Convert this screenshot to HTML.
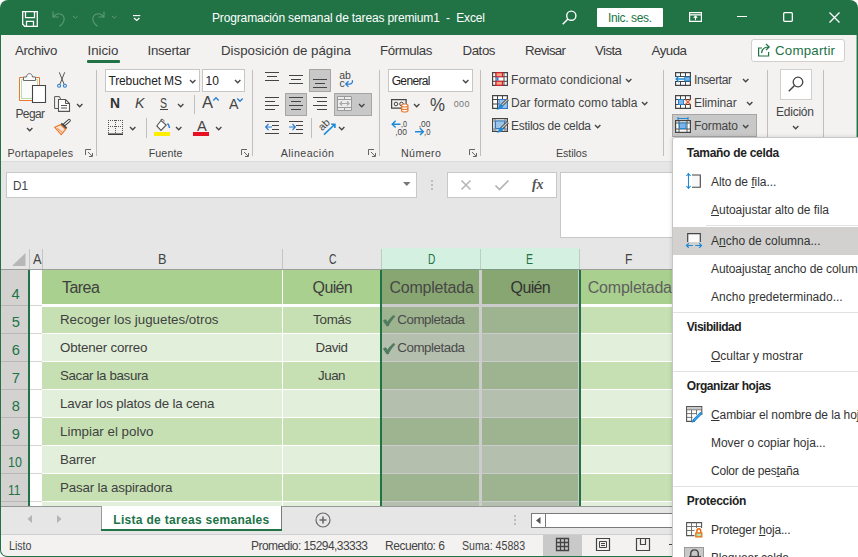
<!DOCTYPE html>
<html lang="es"><head><meta charset="utf-8"><title>Excel</title>
<style>

html,body{margin:0;padding:0;}
body{width:858px;height:557px;overflow:hidden;background:#fff;position:relative;font-family:"Liberation Sans",sans-serif;}
#win{position:absolute;left:0;top:0;width:858px;height:557px;background:#217346;border-radius:8px 8px 7px 7px;}
.a{position:absolute;}
.t{position:absolute;white-space:pre;line-height:normal;}
.t u{text-decoration:underline;text-underline-offset:1px;}
.sep{position:absolute;width:1px;background:#c0bfbe;}
.box{position:absolute;background:#fff;border:1px solid #c6c6c6;box-sizing:border-box;}
.selbtn{position:absolute;background:#c8c8c8;border:1px solid #a6a6a6;box-sizing:border-box;}
svg{position:absolute;overflow:visible;}
.cell{position:absolute;}

</style></head>
<body>

<div id="win">
 <div class="a" id="tabs" style="left:1px;top:35px;width:856px;height:126px;background:#f3f2f1;"></div>
 <div class="a" style="left:1px;top:161px;width:856px;height:1px;background:#dcdcdc;"></div>
 <div class="a" id="fbar" style="left:1px;top:162px;width:856px;height:86px;background:#e6e6e6;"></div>
 <div class="a" style="left:1px;top:248px;width:856px;height:21px;background:#e6e6e6;"></div>
<div class="a" style="left:381px;top:248px;width:199px;height:21px;background:#d3f0e0;"></div>
<div class="a" style="left:1px;top:269px;width:856px;height:1px;background:#9d9d9d;"></div>
<div class="a" style="left:381px;top:269px;width:199px;height:1px;background:#7d9a85;"></div>
<div class="a" style="left:29px;top:249px;width:1px;height:20px;background:#c4c4c4;"></div>
<div class="a" style="left:42px;top:249px;width:1px;height:20px;background:#c4c4c4;"></div>
<div class="a" style="left:282px;top:249px;width:1px;height:20px;background:#c4c4c4;"></div>
<div class="a" style="left:381px;top:249px;width:1px;height:20px;background:#b9cfc2;"></div>
<div class="a" style="left:480px;top:249px;width:1px;height:20px;background:#b9cfc2;"></div>
<div class="a" style="left:579px;top:249px;width:1px;height:20px;background:#b9cfc2;"></div>
<div class="a" style="left:678px;top:249px;width:1px;height:20px;background:#c4c4c4;"></div>
<svg style="left:12px;top:252.500px" width="13.500" height="13"><path d="M13.500 0V13H0Z" fill="#b7b7b7"/></svg>
<div class="a" style="left:1px;top:270px;width:856px;height:236px;background:#fff;"></div>
<div class="a" style="left:1px;top:270px;width:27px;height:236px;background:#d3d2d1;"></div>
<div class="a" style="left:1px;top:305px;width:27px;height:1px;background:#b8b8b8;"></div>
<div class="a" style="left:30px;top:305px;width:12px;height:1px;background:#d4d4d4;"></div>
<div class="a" style="left:1px;top:333px;width:27px;height:1px;background:#b8b8b8;"></div>
<div class="a" style="left:30px;top:333px;width:12px;height:1px;background:#d4d4d4;"></div>
<div class="a" style="left:1px;top:361px;width:27px;height:1px;background:#b8b8b8;"></div>
<div class="a" style="left:30px;top:361px;width:12px;height:1px;background:#d4d4d4;"></div>
<div class="a" style="left:1px;top:389px;width:27px;height:1px;background:#b8b8b8;"></div>
<div class="a" style="left:30px;top:389px;width:12px;height:1px;background:#d4d4d4;"></div>
<div class="a" style="left:1px;top:417px;width:27px;height:1px;background:#b8b8b8;"></div>
<div class="a" style="left:30px;top:417px;width:12px;height:1px;background:#d4d4d4;"></div>
<div class="a" style="left:1px;top:445px;width:27px;height:1px;background:#b8b8b8;"></div>
<div class="a" style="left:30px;top:445px;width:12px;height:1px;background:#d4d4d4;"></div>
<div class="a" style="left:1px;top:473px;width:27px;height:1px;background:#b8b8b8;"></div>
<div class="a" style="left:30px;top:473px;width:12px;height:1px;background:#d4d4d4;"></div>
<div class="a" style="left:1px;top:501px;width:27px;height:1px;background:#b8b8b8;"></div>
<div class="a" style="left:30px;top:501px;width:12px;height:1px;background:#d4d4d4;"></div>
<div class="cell" style="left:42px;top:270px;width:240px;height:34px;background:#a9d08e;"></div>
<div class="cell" style="left:283px;top:270px;width:97px;height:34px;background:#a9d08e;"></div>
<div class="cell" style="left:382px;top:270px;width:97px;height:34px;background:#a9d08e;"></div>
<div class="cell" style="left:482px;top:270px;width:96px;height:34px;background:#a9d08e;"></div>
<div class="cell" style="left:581px;top:270px;width:97px;height:34px;background:#a9d08e;"></div>
<div class="cell" style="left:42px;top:307px;width:240px;height:26px;background:#c6e0b4;"></div>
<div class="cell" style="left:283px;top:307px;width:97px;height:26px;background:#c6e0b4;"></div>
<div class="cell" style="left:382px;top:307px;width:97px;height:26px;background:#c6e0b4;"></div>
<div class="cell" style="left:482px;top:307px;width:96px;height:26px;background:#c6e0b4;"></div>
<div class="cell" style="left:581px;top:307px;width:97px;height:26px;background:#c6e0b4;"></div>
<div class="cell" style="left:42px;top:334px;width:240px;height:27px;background:#e2efda;"></div>
<div class="cell" style="left:283px;top:334px;width:97px;height:27px;background:#e2efda;"></div>
<div class="cell" style="left:382px;top:334px;width:97px;height:27px;background:#e2efda;"></div>
<div class="cell" style="left:482px;top:334px;width:96px;height:27px;background:#e2efda;"></div>
<div class="cell" style="left:581px;top:334px;width:97px;height:27px;background:#e2efda;"></div>
<div class="cell" style="left:42px;top:362px;width:240px;height:27px;background:#c6e0b4;"></div>
<div class="cell" style="left:283px;top:362px;width:97px;height:27px;background:#c6e0b4;"></div>
<div class="cell" style="left:382px;top:362px;width:97px;height:27px;background:#c6e0b4;"></div>
<div class="cell" style="left:482px;top:362px;width:96px;height:27px;background:#c6e0b4;"></div>
<div class="cell" style="left:581px;top:362px;width:97px;height:27px;background:#c6e0b4;"></div>
<div class="cell" style="left:42px;top:390px;width:240px;height:27px;background:#e2efda;"></div>
<div class="cell" style="left:283px;top:390px;width:97px;height:27px;background:#e2efda;"></div>
<div class="cell" style="left:382px;top:390px;width:97px;height:27px;background:#e2efda;"></div>
<div class="cell" style="left:482px;top:390px;width:96px;height:27px;background:#e2efda;"></div>
<div class="cell" style="left:581px;top:390px;width:97px;height:27px;background:#e2efda;"></div>
<div class="cell" style="left:42px;top:418px;width:240px;height:27px;background:#c6e0b4;"></div>
<div class="cell" style="left:283px;top:418px;width:97px;height:27px;background:#c6e0b4;"></div>
<div class="cell" style="left:382px;top:418px;width:97px;height:27px;background:#c6e0b4;"></div>
<div class="cell" style="left:482px;top:418px;width:96px;height:27px;background:#c6e0b4;"></div>
<div class="cell" style="left:581px;top:418px;width:97px;height:27px;background:#c6e0b4;"></div>
<div class="cell" style="left:42px;top:446px;width:240px;height:27px;background:#e2efda;"></div>
<div class="cell" style="left:283px;top:446px;width:97px;height:27px;background:#e2efda;"></div>
<div class="cell" style="left:382px;top:446px;width:97px;height:27px;background:#e2efda;"></div>
<div class="cell" style="left:482px;top:446px;width:96px;height:27px;background:#e2efda;"></div>
<div class="cell" style="left:581px;top:446px;width:97px;height:27px;background:#e2efda;"></div>
<div class="cell" style="left:42px;top:474px;width:240px;height:27px;background:#c6e0b4;"></div>
<div class="cell" style="left:283px;top:474px;width:97px;height:27px;background:#c6e0b4;"></div>
<div class="cell" style="left:382px;top:474px;width:97px;height:27px;background:#c6e0b4;"></div>
<div class="cell" style="left:482px;top:474px;width:96px;height:27px;background:#c6e0b4;"></div>
<div class="cell" style="left:581px;top:474px;width:97px;height:27px;background:#c6e0b4;"></div>
<div class="cell" style="left:42px;top:502px;width:240px;height:4px;background:#e2efda;"></div>
<div class="cell" style="left:283px;top:502px;width:97px;height:4px;background:#e2efda;"></div>
<div class="cell" style="left:382px;top:502px;width:97px;height:4px;background:#e2efda;"></div>
<div class="cell" style="left:482px;top:502px;width:96px;height:4px;background:#e2efda;"></div>
<div class="cell" style="left:581px;top:502px;width:97px;height:4px;background:#e2efda;"></div>
<div class="a" style="left:382px;top:270px;width:197px;height:236px;background:rgba(0,0,0,0.2);"></div>
<div class="a" style="left:28px;top:270px;width:2px;height:236px;background:#217346;"></div>
<div class="a" style="left:380px;top:270px;width:2px;height:236px;background:#217346;"></div>
<div class="a" style="left:579px;top:270px;width:2px;height:236px;background:#217346;"></div>
<svg style="left:383px;top:315px" width="12" height="11" viewBox="0 0 12 11"><path d="M0.300 5.800l2.400 -1.200l1.800 2.600C6.500 4 8.500 1.800 10.800 0.200l1 1.600C9 4.500 7 7.500 5.200 11H3.800z" fill="#4f7d60" stroke="#3d6a4e" stroke-width="0.500"/></svg>
<svg style="left:383px;top:343px" width="12" height="11" viewBox="0 0 12 11"><path d="M0.300 5.800l2.400 -1.200l1.800 2.600C6.500 4 8.500 1.800 10.800 0.200l1 1.600C9 4.500 7 7.500 5.200 11H3.800z" fill="#4f7d60" stroke="#3d6a4e" stroke-width="0.500"/></svg>
 <div class="a" style="left:856px;top:35px;width:1px;height:521px;background:rgba(33,115,70,0.45);z-index:5;"></div>
 <svg style="left:22px;top:11px" width="16" height="16" viewBox="0 0 16 16"><path d="M0.700 0.700h14.600v14.600h-12.600l-2 -2zM3.500 0.700v6h9v-6M4.500 15.300v-5h7v5" fill="none" stroke="#fff" stroke-width="1.3"/></svg>
<svg style="left:52px;top:11px" width="14" height="16" viewBox="0 0 14 16"><path d="M1 0.500v5.500h5.500M1.200 5.800C3 3.500 6 2 9 3.200c4 1.800 4.800 7.500 -1.500 12" fill="none" stroke="#5f9a78" stroke-width="1.1"/></svg>
<svg style="left:72.7px;top:16.2px" width="4.6" height="3.2"><path d="M0 0l2.3 2.2l2.3 -2.2" fill="none" stroke="#5f9a78" stroke-width="1"/></svg>
<svg style="left:91px;top:11px" width="14" height="16" viewBox="0 0 14 16"><path d="M13 0.500v5.500h-5.500M12.800 5.800C11 3.500 8 2 5 3.200c-4 1.800 -4.800 7.500 1.500 12" fill="none" stroke="#5f9a78" stroke-width="1.1"/></svg>
<svg style="left:111.7px;top:16.2px" width="4.6" height="3.2"><path d="M0 0l2.3 2.2l2.3 -2.2" fill="none" stroke="#5f9a78" stroke-width="1"/></svg>
<svg style="left:132.500px;top:15px" width="7" height="6" viewBox="0 0 7 6"><path d="M0 0.600h7.300" stroke="#fff" stroke-width="1.100"/><path d="M1 2.900l2.700 2.500l2.700 -2.500" fill="none" stroke="#fff" stroke-width="1.300"/></svg>
<svg style="left:562px;top:10px" width="15" height="15" viewBox="0 0 15 15"><circle cx="9.300" cy="5.700" r="4.600" fill="none" stroke="#fff" stroke-width="1.4"/><path d="M6 9L0.700 14.300" stroke="#fff" stroke-width="1.5"/></svg>
<div class="a" style="left:597px;top:8px;width:66px;height:19px;background:#fff;border-radius:1px;"></div>
<svg style="left:689px;top:12px" width="13" height="10" viewBox="0 0 13 10"><path d="M0.600 0.600h11.800v8.800h-11.800zM0.600 2.800h11.800" fill="none" stroke="#fff" stroke-width="1.2"/><path d="M6.500 8.300V4.300M4.700 5.800l1.800 -1.800l1.800 1.800" fill="none" stroke="#fff" stroke-width="1.1"/></svg>
<div class="a" style="left:736.500px;top:16px;width:10.500px;height:1.300px;background:#fff;"></div>
<svg style="left:783px;top:12px" width="10" height="10"><rect x="0.650" y="0.650" width="8.700" height="8.700" rx="1" fill="none" stroke="#fff" stroke-width="1.300"/></svg>
<svg style="left:828.500px;top:11.500px" width="11" height="11"><path d="M0.500 0.500l10 10M10.500 0.500l-10 10" stroke="#fff" stroke-width="1.300"/></svg>
<div class="a" style="left:87px;top:60px;width:33px;height:3px;background:#217346;border-radius:1px;"></div>
<div class="a" style="left:750.500px;top:39px;width:94.500px;height:22.500px;background:#fff;border:1px solid #d2d0ce;border-radius:3px;box-sizing:border-box;"></div>
<svg style="left:757px;top:43px" width="14" height="14" viewBox="0 0 14 14"><path d="M5 5H1.600v8h10v-4" fill="none" stroke="#217346" stroke-width="1.2"/><path d="M4.500 10c0.500 -3.500 3 -6 7.500 -6M9 1l3.200 3l-3.200 3" fill="none" stroke="#217346" stroke-width="1.2"/></svg>
<div class="sep" style="left:96px;top:69.5px;height:86.5px;"></div>
<div class="sep" style="left:252px;top:69.5px;height:86.5px;"></div>
<div class="sep" style="left:379px;top:69.5px;height:86.5px;"></div>
<div class="sep" style="left:480px;top:69.5px;height:86.5px;"></div>
<div class="sep" style="left:663px;top:69.5px;height:86.5px;"></div>
<div class="sep" style="left:767px;top:69.5px;height:86.5px;"></div>
<div class="sep" style="left:823px;top:69.5px;height:86.5px;"></div>
<div class="sep" style="left:194px;top:95px;height:19px;"></div>
<div class="sep" style="left:146px;top:118px;height:19.5px;"></div>
<div class="sep" style="left:311px;top:118px;height:20px;"></div>
<svg style="left:85px;top:149px" width="8" height="8" viewBox="0 0 8 8"><path d="M0.500 6V0.500H6" fill="none" stroke="#666" stroke-width="1"/><path d="M3 3l4 4M7.500 4v3.500H4" fill="none" stroke="#666" stroke-width="1"/></svg>
<svg style="left:241px;top:149px" width="8" height="8" viewBox="0 0 8 8"><path d="M0.500 6V0.500H6" fill="none" stroke="#666" stroke-width="1"/><path d="M3 3l4 4M7.500 4v3.500H4" fill="none" stroke="#666" stroke-width="1"/></svg>
<svg style="left:368px;top:149px" width="8" height="8" viewBox="0 0 8 8"><path d="M0.500 6V0.500H6" fill="none" stroke="#666" stroke-width="1"/><path d="M3 3l4 4M7.500 4v3.500H4" fill="none" stroke="#666" stroke-width="1"/></svg>
<svg style="left:469px;top:149px" width="8" height="8" viewBox="0 0 8 8"><path d="M0.500 6V0.500H6" fill="none" stroke="#666" stroke-width="1"/><path d="M3 3l4 4M7.500 4v3.500H4" fill="none" stroke="#666" stroke-width="1"/></svg>
<svg style="left:19px;top:72px" width="28" height="32" viewBox="0 0 28 32">
<path d="M0.500 5.500h20v23h-20z" fill="#fdfdfd" stroke="#e8792d" stroke-width="1"/>
<path d="M2.500 7.500h16v19h-16z" fill="#fbfbfb" stroke="#b9dcae" stroke-width="1"/>
<path d="M4.500 8.500v-3.500h3c0.300 -4.500 5.700 -4.500 6 0h3v3.500z" fill="#fbfbfb" stroke="#6a6a6a" stroke-width="1"/>
<path d="M13.500 13.500h13v17h-13z" fill="#fff" stroke="#444" stroke-width="1.100"/></svg>
<svg style="left:27.3px;top:128.1px" width="5.4" height="3.8"><path d="M0 0l2.7 2.8l2.7 -2.8" fill="none" stroke="#444" stroke-width="1.3"/></svg>
<svg style="left:57px;top:72px" width="11" height="16" viewBox="0 0 11 16">
<path d="M2.300 0.300L7 12M7.700 0.300L3 12" fill="none" stroke="#555" stroke-width="1"/>
<circle cx="2.100" cy="13.800" r="1.500" fill="none" stroke="#2b7cd3" stroke-width="1.100"/><circle cx="7.900" cy="13.800" r="1.500" fill="none" stroke="#2b7cd3" stroke-width="1.100"/></svg>
<svg style="left:54px;top:96px" width="17" height="16" viewBox="0 0 17 16">
<path d="M6.500 3.200L5.500 0.600H0.600v11.900h3.900" fill="none" stroke="#555" stroke-width="1"/>
<path d="M4.500 3.500h7l4 4v7.900h-11z" fill="#fff" stroke="#555" stroke-width="1.1"/><path d="M11.500 3.500v4h4" fill="none" stroke="#555" stroke-width="1"/><path d="M7 9.500h6M7 12h6" stroke="#555" stroke-width="1"/></svg>
<svg style="left:76.8px;top:103.6px" width="5.4" height="3.8"><path d="M0 0l2.7 2.8l2.7 -2.8" fill="none" stroke="#444" stroke-width="1.3"/></svg>
<svg style="left:54px;top:119px" width="17" height="17" viewBox="0 0 17 17">
<path d="M15.200 1.500L10.300 5.800" stroke="#444" stroke-width="3.200" stroke-linecap="round"/><path d="M15.200 1.500L10.800 5.400" stroke="#fff" stroke-width="1.200" stroke-linecap="round"/>
<path d="M7.200 4.600l5.400 5" stroke="#444" stroke-width="2"/>
<path d="M0.700 8.300L6.600 5.600l5 4.800l-4.400 5.300z" fill="#fbe3d3" stroke="#e8792d" stroke-width="1.200"/><path d="M3.500 9.500l5 4" stroke="#e8792d" stroke-width="1"/></svg>
<div class="box" style="left:105px;top:69px;width:94.500px;height:23px;"></div>
<div class="box" style="left:202px;top:69px;width:43px;height:23px;"></div>
<svg style="left:189.8px;top:80.1px" width="5.4" height="3.8"><path d="M0 0l2.7 2.8l2.7 -2.8" fill="none" stroke="#444" stroke-width="1.3"/></svg>
<svg style="left:235.3px;top:80.1px" width="5.4" height="3.8"><path d="M0 0l2.7 2.8l2.7 -2.8" fill="none" stroke="#444" stroke-width="1.3"/></svg>
<div class="a" style="left:160px;top:109px;width:7.500px;height:1px;background:#444;"></div>
<svg style="left:177.8px;top:103.6px" width="5.4" height="3.8"><path d="M0 0l2.7 2.8l2.7 -2.8" fill="none" stroke="#444" stroke-width="1.3"/></svg>
<svg style="left:212.500px;top:97px" width="6" height="4"><path d="M0.300 3.500l2.700 -2.800l2.700 2.800" fill="none" stroke="#2b7cd3" stroke-width="1.3"/></svg>
<svg style="left:236.500px;top:97.500px" width="6" height="4"><path d="M0.300 0.500l2.700 2.800l2.700 -2.800" fill="none" stroke="#2b7cd3" stroke-width="1.3"/></svg>
<svg style="left:108px;top:119.500px" width="16" height="16" viewBox="0 0 16 16"><path d="M0 0.500h15M0 6.500h15M0.500 0v13M14.500 0v13M7.500 0v13" fill="none" stroke="#555" stroke-width="1" stroke-dasharray="1 1"/><path d="M0 14.200h15" stroke="#333" stroke-width="1.500"/></svg>
<svg style="left:130.3px;top:127.1px" width="5.4" height="3.8"><path d="M0 0l2.7 2.8l2.7 -2.8" fill="none" stroke="#444" stroke-width="1.3"/></svg>
<svg style="left:155px;top:119px" width="16" height="13" viewBox="0 0 16 13"><path d="M6 1.500L1.800 7l4.200 4.500l5.200 -5.500z" fill="#fff" stroke="#555" stroke-width="1.100"/><path d="M6 1.500V0.500c1.800 -0.700 3 0.500 3 2" fill="none" stroke="#555" stroke-width="1"/><path d="M12.500 4.500c1.500 1.500 2 3 2 4.500" fill="none" stroke="#2b7cd3" stroke-width="1.500"/></svg>
<div class="a" style="left:153.500px;top:132px;width:16.500px;height:3.500px;background:#ffee00;"></div>
<svg style="left:176.0px;top:127.1px" width="5.4" height="3.8"><path d="M0 0l2.7 2.8l2.7 -2.8" fill="none" stroke="#444" stroke-width="1.3"/></svg>
<div class="a" style="left:192.500px;top:132px;width:16.500px;height:3.500px;background:#e81123;"></div>
<svg style="left:216.0px;top:127.1px" width="5.4" height="3.8"><path d="M0 0l2.7 2.8l2.7 -2.8" fill="none" stroke="#444" stroke-width="1.3"/></svg>
<div class="selbtn" style="left:309px;top:69px;width:22px;height:23px;"></div>
<div class="selbtn" style="left:285px;top:93px;width:22px;height:23px;"></div>
<div class="selbtn" style="left:333.500px;top:93px;width:38.500px;height:23px;"></div>
<div class="a" style="left:265.0px;top:72px;width:14px;height:1px;background:#444;"></div><div class="a" style="left:267.0px;top:76px;width:10px;height:1px;background:#444;"></div><div class="a" style="left:265.0px;top:80px;width:14px;height:1px;background:#444;"></div>
<div class="a" style="left:289.0px;top:75px;width:14px;height:1px;background:#444;"></div><div class="a" style="left:291.0px;top:79px;width:10px;height:1px;background:#444;"></div><div class="a" style="left:289.0px;top:83px;width:14px;height:1px;background:#444;"></div>
<div class="a" style="left:313.0px;top:79px;width:14px;height:1px;background:#444;"></div><div class="a" style="left:315.0px;top:83px;width:10px;height:1px;background:#444;"></div><div class="a" style="left:313.0px;top:87px;width:14px;height:1px;background:#444;"></div>
<div class="a" style="left:265px;top:97px;width:14px;height:1px;background:#444;"></div><div class="a" style="left:265px;top:101px;width:10px;height:1px;background:#444;"></div><div class="a" style="left:265px;top:105px;width:14px;height:1px;background:#444;"></div><div class="a" style="left:265px;top:109px;width:10px;height:1px;background:#444;"></div>
<div class="a" style="left:289.0px;top:97px;width:14px;height:1px;background:#444;"></div><div class="a" style="left:291.0px;top:101px;width:10px;height:1px;background:#444;"></div><div class="a" style="left:289.0px;top:105px;width:14px;height:1px;background:#444;"></div><div class="a" style="left:291.0px;top:109px;width:10px;height:1px;background:#444;"></div>
<div class="a" style="left:313px;top:97px;width:14px;height:1px;background:#444;"></div><div class="a" style="left:317px;top:101px;width:10px;height:1px;background:#444;"></div><div class="a" style="left:313px;top:105px;width:14px;height:1px;background:#444;"></div><div class="a" style="left:317px;top:109px;width:10px;height:1px;background:#444;"></div>
<svg style="left:337px;top:96px" width="15" height="15" viewBox="0 0 15 15"><path d="M0.500 0.500h14v14h-14z" fill="#ececec" stroke="#9a9a9a" stroke-width="1"/><path d="M0.500 3.500h14M0.500 11.500h14M7.500 0.500v3M7.500 11.500v3" fill="none" stroke="#9a9a9a" stroke-width="1"/><path d="M3 7.500h9M5 5.500l-2 2l2 2M10 5.500l2 2l-2 2" fill="none" stroke="#a8a8a8" stroke-width="1.100"/></svg>
<svg style="left:359.3px;top:103.6px" width="5.4" height="3.8"><path d="M0 0l2.7 2.8l2.7 -2.8" fill="none" stroke="#444" stroke-width="1.3"/></svg>
<svg style="left:338px;top:72px" width="16" height="17" viewBox="0 0 16 17"><text x="1.200" y="7.400" font-family="Liberation Sans, sans-serif" font-size="10.500" fill="#444">ab</text><text x="1.400" y="14.600" font-family="Liberation Sans, sans-serif" font-size="10.500" fill="#444">c</text><path d="M14.300 8.200c0.800 2.600 -1 3.900 -3 3.900h-3.300M10.500 9.300l-2.800 2.800l2.800 2.800" fill="none" stroke="#2b7cd3" stroke-width="1.300"/></svg>
<div class="a" style="left:272px;top:125px;width:7px;height:1px;background:#444;"></div><div class="a" style="left:272px;top:129px;width:7px;height:1px;background:#444;"></div><div class="a" style="left:265px;top:121px;width:14px;height:1px;background:#444;"></div><div class="a" style="left:265px;top:133px;width:14px;height:1px;background:#444;"></div>
<svg style="left:264.500px;top:123px" width="7" height="8"><path d="M7 4H0.800M3.500 1L0.700 4l2.800 3" fill="none" stroke="#2b7cd3" stroke-width="1.200"/></svg>
<div class="a" style="left:296px;top:125px;width:7px;height:1px;background:#444;"></div><div class="a" style="left:296px;top:129px;width:7px;height:1px;background:#444;"></div><div class="a" style="left:289px;top:121px;width:14px;height:1px;background:#444;"></div><div class="a" style="left:289px;top:133px;width:14px;height:1px;background:#444;"></div>
<svg style="left:288.500px;top:123px" width="7" height="8"><path d="M0 4h6.200M3.500 1l2.800 3l-2.800 3" fill="none" stroke="#2b7cd3" stroke-width="1.200"/></svg>
<svg style="left:318px;top:119px" width="18" height="17" viewBox="0 0 18 17"><text x="0" y="0" transform="translate(4.300,12.300) rotate(-45)" font-family="Liberation Sans, sans-serif" font-size="10.500" fill="#444">ab</text><path d="M6 15.600L16.600 5.500M13.200 5.200h3.700v3.700" fill="none" stroke="#1e8ad6" stroke-width="1.600"/></svg>
<svg style="left:339.3px;top:127.1px" width="5.4" height="3.8"><path d="M0 0l2.7 2.8l2.7 -2.8" fill="none" stroke="#444" stroke-width="1.3"/></svg>
<div class="box" style="left:388px;top:69px;width:85px;height:23px;"></div>
<svg style="left:463.3px;top:80.1px" width="5.4" height="3.8"><path d="M0 0l2.7 2.8l2.7 -2.8" fill="none" stroke="#444" stroke-width="1.3"/></svg>
<svg style="left:390.500px;top:98.500px" width="18" height="14" viewBox="0 0 18 14"><path d="M0.600 0.600h14.500v8.500h-14.500z" fill="#f3f2f1" stroke="#444" stroke-width="1.200"/><circle cx="5" cy="5" r="1.800" fill="none" stroke="#444" stroke-width="1"/><circle cx="10.500" cy="5" r="1.800" fill="none" stroke="#444" stroke-width="1"/><path d="M10.500 6.500v5c0 2 6.500 2 6.500 0v-5c0 -2 -6.500 -2 -6.500 0c0 2 6.500 2 6.500 0M10.500 9c0 2 6.500 2 6.500 0" fill="#fff" stroke="#e8792d" stroke-width="1.100"/></svg>
<svg style="left:414.0px;top:103.6px" width="5.4" height="3.8"><path d="M0 0l2.7 2.8l2.7 -2.8" fill="none" stroke="#444" stroke-width="1.3"/></svg>
<svg style="left:390.500px;top:120px" width="17" height="16" viewBox="0 0 17 16"><path d="M9.500 4.200H1.200M4.600 0.800L1.200 4.200l3.400 3.400" fill="none" stroke="#1e8ad6" stroke-width="1.400"/><text x="10" y="6.800" textLength="6" font-family="Liberation Sans, sans-serif" font-size="9.500" fill="#444" lengthAdjust="spacingAndGlyphs">,0</text><text x="4.200" y="14.900" textLength="11.800" font-family="Liberation Sans, sans-serif" font-size="9.500" fill="#444" lengthAdjust="spacingAndGlyphs">,00</text></svg>
<svg style="left:415px;top:120px" width="17" height="16" viewBox="0 0 17 16"><path d="M0 11.700h8.300M5 8.300l3.400 3.400l-3.400 3.400" fill="none" stroke="#1e8ad6" stroke-width="1.400"/><text x="3.800" y="6.800" textLength="11.600" font-family="Liberation Sans, sans-serif" font-size="9.500" fill="#444" lengthAdjust="spacingAndGlyphs">,00</text><text x="9" y="14.900" textLength="6.400" font-family="Liberation Sans, sans-serif" font-size="9.500" fill="#444" lengthAdjust="spacingAndGlyphs">,0</text></svg>
<svg style="left:492px;top:72px" width="16" height="14" viewBox="0 0 16 14"><path d="M0.600 0.600h14.800v12.800h-14.800z" fill="#fff" stroke="#444" stroke-width="1.200"/><path d="M0.600 4.700h14.800M0.600 9.300h14.800M4 0.600v12.800M12 0.600v12.800" stroke="#444" stroke-width="1"/><path d="M4 0.700h6.500v4h-6.500zM4 9.300h6.500v4h-6.500z" fill="#f4a582" stroke="#e81123" stroke-width="1.100"/><path d="M4.600 5.200h1.900v3.600h-1.900z" fill="#2b7cd3"/></svg>
<svg style="left:492px;top:95px" width="17" height="16" viewBox="0 0 17 16"><path d="M0.600 0.600h14.800v12.800h-14.800z" fill="#fff" stroke="#444" stroke-width="1.200"/><path d="M0.600 4.500h14.800M0.600 9h14.800M5.500 0.600v12.800M10.500 0.600v12.800" stroke="#444" stroke-width="1"/><path d="M7 4.500h8.400v8.900h-8.400z" fill="#9dc3e6" stroke="#2b7cd3" stroke-width="1"/><path d="M15.800 4.200L9.200 10.800" stroke="#444" stroke-width="3"/><path d="M15.500 4.500L9.500 10.500" stroke="#c8c8c8" stroke-width="1.200"/><path d="M9.600 9.200l1.800 1.800c-1 2.800 -4.500 3.800 -7.200 3.600c2 -0.800 2.300 -2 2.600 -3.200c0.300 -1.200 1.300 -2.200 2.800 -2.200z" fill="#1e8ad6"/></svg>
<svg style="left:492px;top:118px" width="17" height="16" viewBox="0 0 17 16"><path d="M0.600 0.600h14.800v12.800h-14.800z" fill="#fff" stroke="#444" stroke-width="1.200"/><path d="M0.600 3h14.800M3 0.600v12.800M0.600 11h14.800M13 0.600v12.800" stroke="#666" stroke-width="0.800"/><path d="M3.500 3h9v7.500h-9z" fill="#9dc3e6" stroke="#2b7cd3" stroke-width="1"/><path d="M15.800 4.200L9.200 10.800" stroke="#444" stroke-width="3"/><path d="M15.500 4.500L9.500 10.500" stroke="#c8c8c8" stroke-width="1.200"/><path d="M9.600 9.200l1.800 1.800c-1 2.800 -4.500 3.800 -7.200 3.600c2 -0.800 2.300 -2 2.600 -3.200c0.300 -1.200 1.300 -2.200 2.800 -2.200z" fill="#1e8ad6"/></svg>
<svg style="left:625.8px;top:78.6px" width="5.4" height="3.8"><path d="M0 0l2.7 2.8l2.7 -2.8" fill="none" stroke="#444" stroke-width="1.3"/></svg>
<svg style="left:642.3px;top:101.6px" width="5.4" height="3.8"><path d="M0 0l2.7 2.8l2.7 -2.8" fill="none" stroke="#444" stroke-width="1.3"/></svg>
<svg style="left:594.8px;top:124.6px" width="5.4" height="3.8"><path d="M0 0l2.7 2.8l2.7 -2.8" fill="none" stroke="#444" stroke-width="1.3"/></svg>
<div class="selbtn" style="left:672px;top:114px;width:85px;height:23px;"></div>
<svg style="left:675px;top:72px" width="16" height="14" viewBox="0 0 16 14"><path d="M0.600 0.600h14.800v12.800h-14.800z" fill="#fff" stroke="#444" stroke-width="1.200"/><path d="M0.600 4.500h14.800M0.600 9.500h14.800M5.500 0.600v3.900M10.500 0.600v3.900M5.500 9.500v3.900M10.500 9.500v3.900" stroke="#444" stroke-width="1"/><path d="M0 5h10v4h-10z" fill="#fff"/><path d="M9.800 5h5.200v4h-5.200z" fill="#7fb2e5" stroke="#1e8ad6" stroke-width="1"/><path d="M10 7H1M4 4L1 7l3 3" fill="none" stroke="#1e8ad6" stroke-width="1.300"/></svg>
<svg style="left:675px;top:95px" width="16" height="14" viewBox="0 0 16 14"><path d="M0.600 0.600h14.800v12.800h-14.800z" fill="#fff" stroke="#444" stroke-width="1.200"/><path d="M0.600 4.500h14.800M0.600 9.500h14.800M5.500 0.600v3.900M10.500 0.600v3.900M5.500 9.500v3.900M10.500 9.500v3.900" stroke="#444" stroke-width="1"/><path d="M1.200 5h15v4h-15z" fill="#f3f2f1"/><path d="M3.500 4.500h5v5h-5z" fill="#7fb2e5" stroke="#1e8ad6" stroke-width="1"/><path d="M10.200 4.300l5.400 5.400M15.600 4.300l-5.400 5.400" stroke="#e8532d" stroke-width="1.200"/></svg>
<svg style="left:675px;top:117px" width="16" height="16" viewBox="0 0 16 16"><path d="M3 1.500h10M3 0v3M13 0v3" stroke="#1e8ad6" stroke-width="1.100"/><path d="M0.600 3.600h14.800v11.800h-14.800z" fill="#fff" stroke="#444" stroke-width="1.200"/><path d="M0.600 6h14.800M0.600 12h14.800M4 3.600v11.800M12 3.600v11.800" stroke="#444" stroke-width="0.900"/><path d="M4.500 6h6.500v5.500h-6.500z" fill="#7fb2e5" stroke="#1e8ad6" stroke-width="1"/></svg>
<svg style="left:743.3px;top:78.6px" width="5.4" height="3.8"><path d="M0 0l2.7 2.8l2.7 -2.8" fill="none" stroke="#444" stroke-width="1.3"/></svg>
<svg style="left:747.3px;top:101.6px" width="5.4" height="3.8"><path d="M0 0l2.7 2.8l2.7 -2.8" fill="none" stroke="#444" stroke-width="1.3"/></svg>
<svg style="left:742.8px;top:124.6px" width="5.4" height="3.8"><path d="M0 0l2.7 2.8l2.7 -2.8" fill="none" stroke="#444" stroke-width="1.3"/></svg>
<div class="box" style="left:780px;top:69px;width:31.500px;height:31px;border-color:#d0d0d0;"></div>
<svg style="left:788px;top:76px" width="16" height="16" viewBox="0 0 16 16"><circle cx="10" cy="6" r="4.800" fill="none" stroke="#444" stroke-width="1.300"/><path d="M6.500 9.500L0.800 15.200" stroke="#444" stroke-width="1.500"/></svg>
<svg style="left:792.8px;top:126.1px" width="5.4" height="3.8"><path d="M0 0l2.7 2.8l2.7 -2.8" fill="none" stroke="#444" stroke-width="1.3"/></svg>
<div class="box" style="left:6px;top:172px;width:411px;height:26px;border-color:#c8c8c8;"></div>
<svg style="left:403px;top:182px" width="8" height="4"><path d="M0 0h7.500l-3.750 4z" fill="#777"/></svg>
<svg style="left:431px;top:180px" width="2" height="10"><path d="M0 0h2v2h-2zM0 4h2v2h-2zM0 8h2v2h-2z" fill="#bdbdbd"/></svg>
<div class="box" style="left:447px;top:172px;width:110px;height:26px;border-color:#c8c8c8;"></div>
<svg style="left:461px;top:180px" width="10" height="10"><path d="M0.500 0.500l9 9M9.500 0.500l-9 9" stroke="#b4b4b4" stroke-width="1.500"/></svg>
<svg style="left:495px;top:180px" width="14" height="10"><path d="M0.500 5.500l4 4L13.500 0.500" fill="none" stroke="#b4b4b4" stroke-width="1.700"/></svg>
<div class="box" style="left:560px;top:172px;width:296px;height:66px;border-color:#c8c8c8;"></div>
 <div class="a" style="left:1px;top:506px;width:856px;height:1px;background:#979797;"></div>
<div class="a" style="left:1px;top:507px;width:856px;height:27px;background:#e6e6e6;"></div>
<div class="a" style="left:1px;top:534px;width:856px;height:1px;background:#cfcfcf;"></div>
<div class="a" style="left:1px;top:535px;width:856px;height:21px;background:#f3f2f1;border-radius:0 0 0 6px;"></div>
<div class="a" style="left:101px;top:506px;width:181px;height:23px;background:#fff;border-left:1px solid #9a9a9a;border-right:1px solid #7c7c7c;box-sizing:border-box;"></div>
<div class="a" style="left:101px;top:529px;width:181px;height:2px;background:#217346;"></div>
<svg style="left:27px;top:515px" width="36" height="9"><path d="M5 0v8L0.5 4z M30 0v8l4.500 -4z" fill="#b4b4b4"/></svg>
<svg style="left:315px;top:511.700px" width="16" height="16" viewBox="0 0 16 16"><circle cx="8" cy="8" r="7" fill="none" stroke="#6a6a6a" stroke-width="1.2"/><path d="M4.500 8h7M8 4.500v7" stroke="#6a6a6a" stroke-width="1.6"/></svg>
<svg style="left:514px;top:515px" width="2" height="10"><path d="M0 0h2v2h-2zM0 4h2v2h-2zM0 8h2v2h-2z" fill="#bdbdbd"/></svg>
<div class="a" style="left:531px;top:513px;width:325px;height:15px;background:#fff;border:1px solid #7a7a7a;box-sizing:border-box;"></div>
<div class="a" style="left:545px;top:513px;width:1px;height:15px;background:#7a7a7a;"></div>
<svg style="left:536px;top:517px" width="5" height="7"><path d="M4.500 0v7L0 3.500z" fill="#555"/></svg>
<div class="a" style="left:543px;top:535px;width:39px;height:21px;background:#c9c9c9;"></div>
<svg style="left:556px;top:538px" width="13" height="13" viewBox="0 0 13 13"><path d="M0.500 0.500h12v12h-12zM0.500 4.500h12M0.500 8.500h12M4.500 0.500v12M8.500 0.500v12" fill="none" stroke="#444" stroke-width="1.3"/></svg>
<svg style="left:596px;top:538px" width="14" height="13" viewBox="0 0 14 13"><path d="M0.500 0.500h13v12h-13z" fill="none" stroke="#444" stroke-width="1.2"/><path d="M3.500 3.500h7v6h-7zM5 5.500h4M5 7.500h4" fill="none" stroke="#444" stroke-width="1"/></svg>
<svg style="left:636px;top:538px" width="14" height="13" viewBox="0 0 14 13"><path d="M0.500 0.500h13v12h-13zM4.500 0.500v6h5v-6" fill="none" stroke="#444" stroke-width="1.2"/></svg>
<div class="a" style="left:669px;top:544px;width:6px;height:1px;background:#444;"></div>
 <div class="a" style="left:672px;top:137px;width:190px;height:425px;background:#fff;border:1px solid #c6c6c6;border-radius:3px 0 0 0;box-sizing:border-box;z-index:20;box-shadow:0 0 4px rgba(0,0,0,0.15);"></div>
<div class="a" style="left:673px;top:227px;width:185px;height:28px;background:#d2d1d0;z-index:21;"></div>
<div class="a" style="left:706px;top:225px;width:152px;height:1px;background:#e1e1e1;z-index:21;"></div>
<div class="a" style="left:673px;top:312px;width:185px;height:1px;background:#e1e1e1;z-index:21;"></div>
<div class="a" style="left:673px;top:371px;width:185px;height:1px;background:#e1e1e1;z-index:21;"></div>
<div class="a" style="left:673px;top:486px;width:185px;height:1px;background:#e1e1e1;z-index:21;"></div>
<svg style="left:686px;top:172px;z-index:22" width="16" height="18" viewBox="0 0 16 18"><path d="M2.500 1.800v14.400M0.400 4l2.100 -2.400l2.100 2.400M0.400 14l2.100 2.400l2.100 -2.400" fill="none" stroke="#1e8ad6" stroke-width="1.100"/><path d="M6 3h8.300v12.200h-8.300" fill="#f8f8f8" stroke="#444" stroke-width="1.100"/></svg>
<svg style="left:686px;top:230px;z-index:22" width="18" height="18" viewBox="0 0 18 18"><path d="M1.700 12V3.700h12.600V12" fill="#fafafa" stroke="#444" stroke-width="1.200"/><path d="M0.600 15.500h6.200M2.800 13.300l-2.300 2.200l2.300 2.200M9.200 15.500h6.200M13.200 13.300l2.300 2.200l-2.300 2.200" fill="none" stroke="#1e8ad6" stroke-width="1.200"/></svg>
<svg style="left:686px;top:406px;z-index:22" width="18" height="17" viewBox="0 0 18 17"><path d="M0.600 0.600h15.200v14.800h-15.200z" fill="#fff" stroke="#555" stroke-width="1.100"/><path d="M1.200 1.200h14v2h-14z" fill="#c8c8c8"/><path d="M0.600 3.800h15.200M0.600 7.600h10M0.600 11.400h6M5.500 3.800v11.600M10.500 3.800v5" stroke="#666" stroke-width="0.900"/><path d="M9 9h8v8h-8z" fill="#fff"/><path d="M14.500 5.800l2 2l-8 8l-3 1l1 -3z" fill="#1e8ad6"/><path d="M14.300 8l-5.600 5.600" stroke="#cfe4f7" stroke-width="0.700" stroke-dasharray="1 0.800"/></svg>
<svg style="left:686px;top:522px;z-index:22" width="18" height="17" viewBox="0 0 18 17"><path d="M0.600 0.600h15v13h-15z" fill="#fff" stroke="#555" stroke-width="1.100"/><path d="M0.600 4.500h15M0.600 8.500h15M5.500 0.600v13M10.500 0.600v13" stroke="#666" stroke-width="0.900"/><path d="M8.500 6h9v9h-9z" fill="#fff"/><path d="M9.800 10.800h6v4h-6z" fill="#b6e2b0" stroke="#e8690b" stroke-width="1.200"/><path d="M10.900 10.600V9c0 -3 3.800 -3 3.800 0v1.600" fill="none" stroke="#e8690b" stroke-width="1.500"/></svg>
<div class="a" style="left:684px;top:547px;width:20px;height:14px;background:#c8c8c8;border:1px solid #9a9a9a;box-sizing:border-box;z-index:22;"></div><svg style="left:689px;top:549px;z-index:23" width="12" height="9" viewBox="0 0 12 9"><path d="M1.700 9V5c0 -5.500 7.600 -5.500 7.600 0V9" fill="none" stroke="#444" stroke-width="1.400"/><path d="M0 7.600h12" stroke="#444" stroke-width="1.400"/></svg>
 <span class="t" style="left:212px;font-size:12px;color:#fff;letter-spacing:-0.148px;top:11.00px;">Programación semanal de tareas premium1  -  Excel</span>
<span class="t" style="left:608px;font-size:12px;color:#217346;letter-spacing:-0.373px;top:11.00px;">Inic. ses.</span>
<span class="t" style="left:15px;font-size:13.3px;color:#3b3b3b;letter-spacing:-0.341px;top:43.00px;">Archivo</span>
<span class="t" style="left:87.5px;font-size:13.3px;color:#3b3b3b;letter-spacing:-0.049px;top:43.00px;">Inicio</span>
<span class="t" style="left:147.5px;font-size:13.3px;color:#3b3b3b;letter-spacing:-0.299px;top:43.00px;">Insertar</span>
<span class="t" style="left:221px;font-size:13.3px;color:#3b3b3b;letter-spacing:-0.005px;top:43.00px;">Disposición de página</span>
<span class="t" style="left:380px;font-size:13.3px;color:#3b3b3b;letter-spacing:-0.417px;top:43.00px;">Fórmulas</span>
<span class="t" style="left:462.5px;font-size:13.3px;color:#3b3b3b;letter-spacing:-0.438px;top:43.00px;">Datos</span>
<span class="t" style="left:525px;font-size:13.3px;color:#3b3b3b;letter-spacing:-0.680px;top:43.00px;">Revisar</span>
<span class="t" style="left:595px;font-size:13.3px;color:#3b3b3b;letter-spacing:-0.582px;top:43.00px;">Vista</span>
<span class="t" style="left:651.5px;font-size:13.3px;color:#3b3b3b;letter-spacing:-0.492px;top:43.00px;">Ayuda</span>
<span class="t" style="left:775px;font-size:13.3px;color:#217346;letter-spacing:0.203px;top:43.00px;">Compartir</span>
<span class="t" style="left:7.5px;font-size:10.67px;color:#444;letter-spacing:0.244px;top:147.00px;">Portapapeles</span>
<span class="t" style="left:148.7px;font-size:10.67px;color:#444;letter-spacing:0.123px;top:147.00px;">Fuente</span>
<span class="t" style="left:280.7px;font-size:10.67px;color:#444;letter-spacing:0.459px;top:147.00px;">Alineación</span>
<span class="t" style="left:401px;font-size:10.67px;color:#444;letter-spacing:0.419px;top:147.00px;">Número</span>
<span class="t" style="left:556px;font-size:10.67px;color:#444;letter-spacing:-0.065px;top:147.00px;">Estilos</span>
<span class="t" style="left:15.5px;font-size:12px;color:#444;letter-spacing:-0.633px;top:107.00px;">Pegar</span>
<span class="t" style="left:108.4px;font-size:12px;color:#222;letter-spacing:-0.120px;top:74.00px;">Trebuchet MS</span>
<span class="t" style="left:205.5px;font-size:12px;color:#222;top:74.00px;">10</span>
<span class="t" style="left:110px;font-size:14px;color:#333;font-weight:bold;top:95.00px;transform:scaleX(0.988);transform-origin:0 0;">N</span>
<span class="t" style="left:135px;font-size:14px;color:#444;font-style:italic;top:95.00px;transform:scaleX(1.017);transform-origin:0 0;">K</span>
<span class="t" style="left:160px;font-size:14px;color:#444;top:95.00px;transform:scaleX(0.749);transform-origin:0 0;">S</span>
<span class="t" style="left:202px;font-size:16px;color:#444;top:94.00px;transform:scaleX(1.031);transform-origin:0 0;">A</span>
<span class="t" style="left:228.5px;font-size:14px;color:#444;top:96.00px;transform:scaleX(1.017);transform-origin:0 0;">A</span>
<span class="t" style="left:196.5px;font-size:14px;color:#444;top:118.00px;transform:scaleX(1.049);transform-origin:0 0;">A</span>
<span class="t" style="left:391.7px;font-size:12px;color:#222;letter-spacing:-0.651px;top:74.00px;">General</span>
<span class="t" style="left:430px;font-size:19px;color:#444;top:94.00px;transform:scaleX(0.887);transform-origin:0 0;">%</span>
<span class="t" style="left:453.7px;font-size:9px;color:#777;letter-spacing:0.384px;top:99.00px;">000</span>
<span class="t" style="left:511px;font-size:12px;color:#444;letter-spacing:0.135px;top:73.00px;">Formato condicional</span>
<span class="t" style="left:511px;font-size:12px;color:#444;letter-spacing:0.053px;top:96.00px;">Dar formato como tabla</span>
<span class="t" style="left:511px;font-size:12px;color:#444;letter-spacing:-0.270px;top:119.00px;">Estilos de celda</span>
<span class="t" style="left:694px;font-size:12px;color:#444;letter-spacing:-0.384px;top:73.00px;">Insertar</span>
<span class="t" style="left:694px;font-size:12px;color:#444;letter-spacing:-0.092px;top:96.00px;">Eliminar</span>
<span class="t" style="left:694px;font-size:12px;color:#444;letter-spacing:-0.115px;top:119.00px;">Formato</span>
<span class="t" style="left:776px;font-size:12px;color:#444;letter-spacing:-0.227px;top:105.00px;">Edición</span>
<span class="t" style="left:13px;font-size:13px;color:#444;top:178.00px;transform:scaleX(0.902);transform-origin:0 0;">D1</span>
<span class="t" style="left:532px;font-size:14px;color:#555;font-weight:bold;font-style:italic;font-family:'Liberation Serif',serif;letter-spacing:-0.072px;top:177.00px;">fx</span>
<span class="t" style="left:32.5px;font-size:14.67px;color:#444;top:251.00px;transform:scaleX(0.869);transform-origin:0 0;">A</span>
<span class="t" style="left:157.5px;font-size:14.67px;color:#444;top:251.00px;transform:scaleX(0.869);transform-origin:0 0;">B</span>
<span class="t" style="left:328.8px;font-size:14.67px;color:#444;top:251.00px;transform:scaleX(0.708);transform-origin:0 0;">C</span>
<span class="t" style="left:427.7px;font-size:14.67px;color:#217346;top:251.00px;transform:scaleX(0.689);transform-origin:0 0;">D</span>
<span class="t" style="left:526px;font-size:14.67px;color:#217346;top:251.00px;transform:scaleX(0.716);transform-origin:0 0;">E</span>
<span class="t" style="left:625px;font-size:14.67px;color:#444;top:251.00px;transform:scaleX(0.827);transform-origin:0 0;">F</span>
<span class="t" style="left:11.4px;font-size:14.67px;color:#217346;top:286.00px;">4</span>
<span class="t" style="left:11.8px;font-size:14.67px;color:#217346;top:314.00px;">5</span>
<span class="t" style="left:11.8px;font-size:14.67px;color:#217346;top:342.00px;">6</span>
<span class="t" style="left:11.8px;font-size:14.67px;color:#217346;top:370.00px;">7</span>
<span class="t" style="left:11.8px;font-size:14.67px;color:#217346;top:398.00px;">8</span>
<span class="t" style="left:11.8px;font-size:14.67px;color:#217346;top:426.00px;">9</span>
<span class="t" style="left:8.4px;font-size:14.67px;color:#217346;top:454.00px;transform:scaleX(0.852);transform-origin:0 0;">10</span>
<span class="t" style="left:8.4px;font-size:14.67px;color:#217346;top:482.00px;transform:scaleX(0.828);transform-origin:0 0;">11</span>
<span class="t" style="left:62px;font-size:16px;color:#404040;letter-spacing:-0.558px;top:279.00px;">Tarea</span>
<span class="t" style="left:312.6px;font-size:16px;color:#404040;letter-spacing:-0.651px;top:279.00px;">Quién</span>
<span class="t" style="left:389.4px;font-size:16px;color:#474747;letter-spacing:-0.209px;top:279.00px;">Completada</span>
<span class="t" style="left:510.6px;font-size:16px;color:#333;letter-spacing:-0.651px;top:279.00px;">Quién</span>
<span class="t" style="left:587.8px;font-size:16px;color:#5f5f5f;letter-spacing:-0.231px;top:279.00px;">Completada</span>
<span class="t" style="left:60px;font-size:13.33px;color:#404040;letter-spacing:-0.002px;top:312.00px;">Recoger los juguetes/otros</span>
<span class="t" style="left:60px;font-size:13.33px;color:#404040;letter-spacing:-0.165px;top:340.00px;">Obtener correo</span>
<span class="t" style="left:60px;font-size:13.33px;color:#404040;letter-spacing:-0.347px;top:368.00px;">Sacar la basura</span>
<span class="t" style="left:60px;font-size:13.33px;color:#404040;letter-spacing:-0.156px;top:396.00px;">Lavar los platos de la cena</span>
<span class="t" style="left:60px;font-size:13.33px;color:#404040;letter-spacing:0.010px;top:424.00px;">Limpiar el polvo</span>
<span class="t" style="left:60px;font-size:13.33px;color:#404040;letter-spacing:-0.206px;top:452.00px;">Barrer</span>
<span class="t" style="left:60px;font-size:13.33px;color:#404040;letter-spacing:-0.171px;top:480.00px;">Pasar la aspiradora</span>
<span class="t" style="left:313px;font-size:13.33px;color:#404040;letter-spacing:-0.191px;top:312.00px;">Tomás</span>
<span class="t" style="left:315.5px;font-size:13.33px;color:#404040;letter-spacing:-0.395px;top:340.00px;">David</span>
<span class="t" style="left:318px;font-size:13.33px;color:#404040;letter-spacing:-0.469px;top:368.00px;">Juan</span>
<span class="t" style="left:397.3px;font-size:13.33px;color:#4a4a4a;letter-spacing:-0.464px;top:312.00px;">Completada</span>
<span class="t" style="left:397.3px;font-size:13.33px;color:#4a4a4a;letter-spacing:-0.464px;top:340.00px;">Completada</span>
<span class="t" style="left:113.3px;font-size:12px;color:#217346;font-weight:bold;letter-spacing:0.301px;top:513.00px;">Lista de tareas semanales</span>
<span class="t" style="left:8.7px;font-size:12px;color:#444;top:539.00px;transform:scaleX(0.887);transform-origin:0 0;">Listo</span>
<span class="t" style="left:251px;font-size:12px;color:#444;letter-spacing:-0.555px;top:539.00px;">Promedio: 15294,33333</span>
<span class="t" style="left:385px;font-size:12px;color:#444;letter-spacing:-0.472px;top:539.00px;">Recuento: 6</span>
<span class="t" style="left:461.5px;font-size:12px;color:#444;top:539.00px;transform:scaleX(0.884);transform-origin:0 0;">Suma: 45883</span>
<span class="t" style="left:686.8px;font-size:12px;color:#222;font-weight:bold;letter-spacing:-0.292px;top:146.00px;z-index:30;">Tamaño de celda</span>
<span class="t" style="left:711px;font-size:12px;color:#333;letter-spacing:-0.054px;top:175.00px;z-index:30;">Alto de <u>f</u>ila...</span>
<span class="t" style="left:711px;font-size:12px;color:#333;letter-spacing:-0.033px;top:203.00px;z-index:30;"><u>A</u>utoajustar alto de fila</span>
<span class="t" style="left:711px;font-size:12px;color:#333;letter-spacing:0.003px;top:234.00px;z-index:30;">A<u>n</u>cho de columna...</span>
<span class="t" style="left:711px;font-size:12px;color:#333;letter-spacing:-0.079px;top:262.00px;z-index:30;">Autoajusta<u>r</u> ancho de columna</span>
<span class="t" style="left:711px;font-size:12px;color:#333;letter-spacing:0.012px;top:290.00px;z-index:30;">Ancho <u>p</u>redeterminado...</span>
<span class="t" style="left:686.8px;font-size:12px;color:#222;font-weight:bold;letter-spacing:-0.500px;top:320.00px;z-index:30;">Visibilidad</span>
<span class="t" style="left:711px;font-size:12px;color:#333;letter-spacing:-0.002px;top:349.00px;z-index:30;"><u>O</u>cultar y mostrar</span>
<span class="t" style="left:686.8px;font-size:12px;color:#222;font-weight:bold;letter-spacing:-0.443px;top:379.00px;z-index:30;">Organizar hojas</span>
<span class="t" style="left:711px;font-size:12px;color:#333;letter-spacing:-0.090px;top:408.00px;z-index:30;"><u>C</u>ambiar el nombre de la hoja</span>
<span class="t" style="left:711px;font-size:12px;color:#333;letter-spacing:-0.034px;top:436.00px;z-index:30;">Mover o copiar ho<u>j</u>a...</span>
<span class="t" style="left:711px;font-size:12px;color:#333;letter-spacing:-0.215px;top:464.00px;z-index:30;">Color de pes<u>t</u>aña</span>
<span class="t" style="left:686.8px;font-size:12px;color:#222;font-weight:bold;letter-spacing:-0.268px;top:494.00px;z-index:30;">Protección</span>
<span class="t" style="left:711px;font-size:12px;color:#333;letter-spacing:-0.164px;top:523.00px;z-index:30;">Proteger <u>h</u>oja...</span>
<span class="t" style="left:711px;font-size:12px;color:#333;letter-spacing:-0.159px;top:551.00px;z-index:30;">Bloquear celda</span>
</div>

</body></html>
